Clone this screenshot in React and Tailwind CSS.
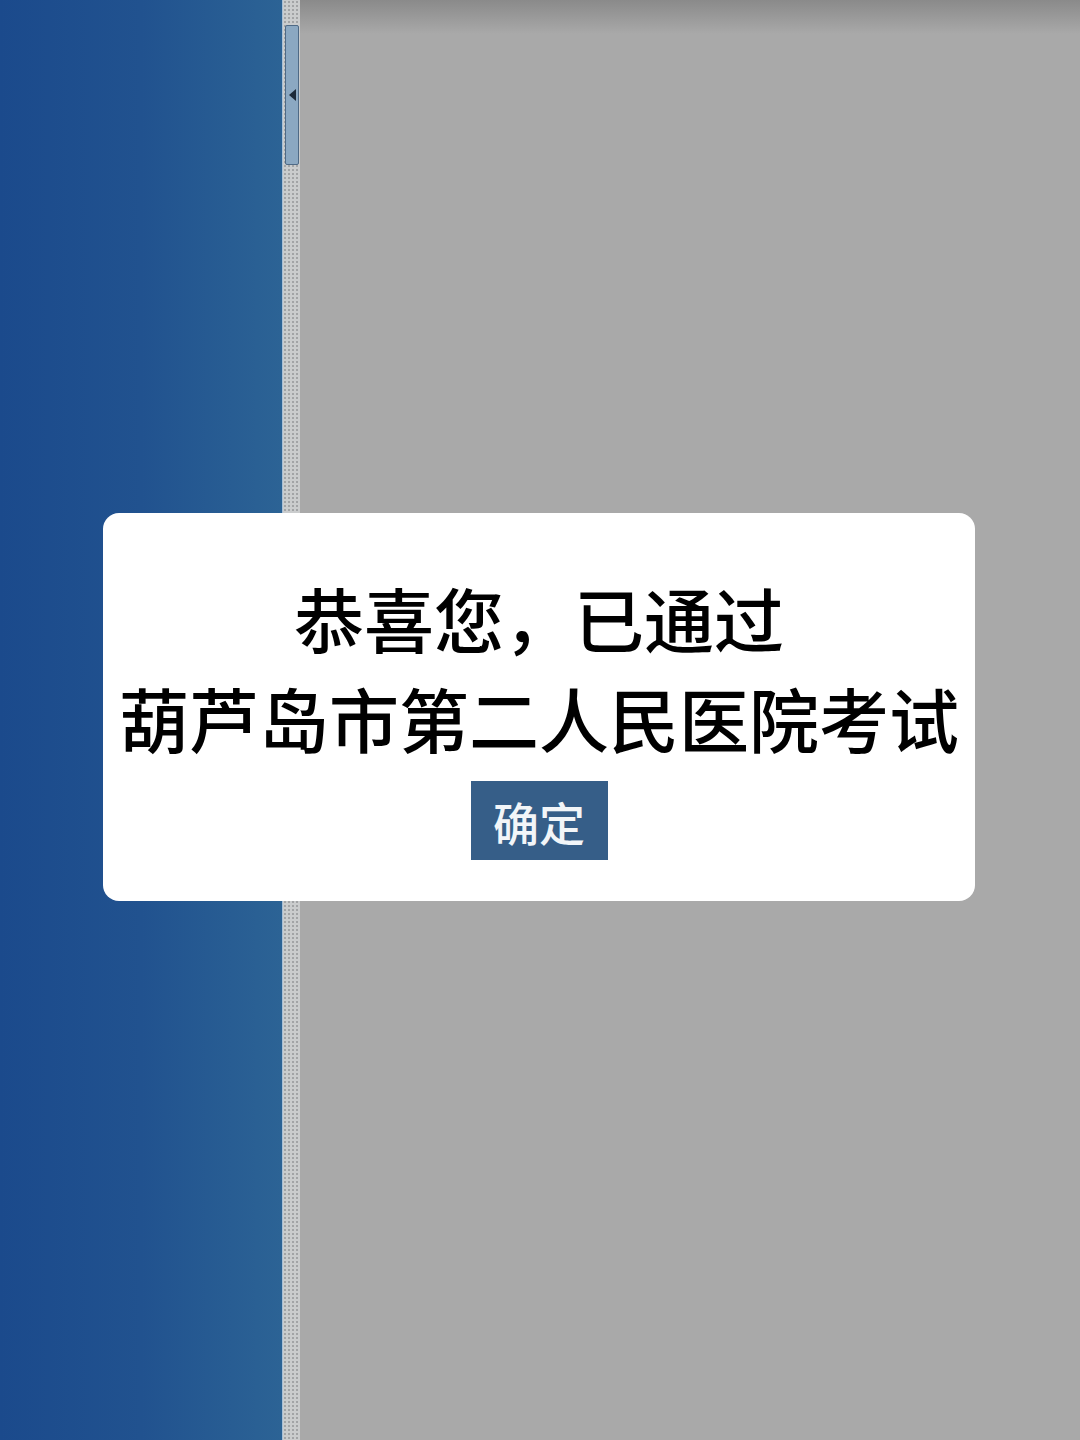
export default function App() {
  return (
    <div
      className="relative flex h-[1440px] w-[1080px] overflow-hidden"
      style={{ fontFamily: '"Noto Sans CJK SC", "Noto Sans", sans-serif' }}
    >
      {/* left nav panel */}
      <div className="w-[282px] shrink-0 bg-gradient-to-r from-[#1b4a8c] via-[#21528f] to-[#2c6395]" />

      {/* splitter bar with collapse handle */}
      <div className="relative w-[18px] shrink-0 border-l border-[#a9c0d6] bg-[#cacccd] bg-[radial-gradient(circle,#a2a4a6_1px,transparent_1.2px)] bg-[length:4px_4px]">
        <div className="absolute left-[2px] top-[25px] flex h-[140px] w-[14px] items-center justify-center rounded-[2px] border border-[#4f6a86] bg-[#8ba8c2]">
          <div className="h-0 w-0 border-y-[6px] border-r-[7px] border-y-transparent border-r-[#1d2a3a]" />
        </div>
      </div>

      {/* content area */}
      <div className="flex-1 bg-[#a9a9a9]">
        <div className="h-[34px] bg-gradient-to-b from-[#8a8a8a] to-[#a9a9a9]" />
      </div>

      {/* result dialog */}
      <div className="absolute left-[103px] top-[513px] flex w-[872px] flex-col items-center rounded-[16px] bg-white pb-[41px] pt-[55px]">
        <p className="text-[70px] font-medium leading-[100px] text-black">恭喜您，已通过</p>
        <p className="text-[70px] font-medium leading-[100px] text-black">葫芦岛市第二人民医院考试</p>
        <button className="mt-[13px] flex h-[79px] w-[137px] items-center justify-center bg-[#365e88] text-[46px] font-medium leading-none text-[#f2f5f8]">
          确定
        </button>
      </div>
    </div>
  );
}
